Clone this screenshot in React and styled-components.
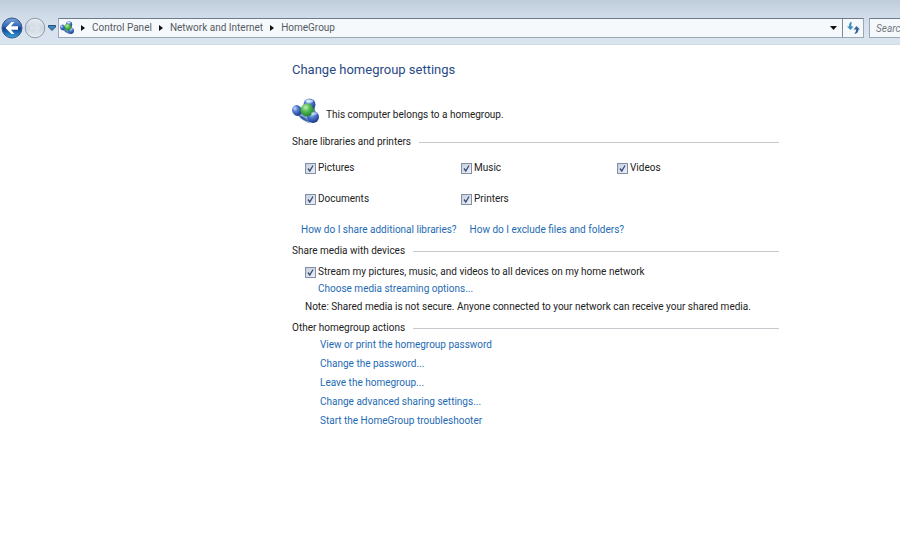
import React from "react";
import styled, { createGlobalStyle } from "styled-components";

const GlobalStyle = createGlobalStyle`
  * { box-sizing: border-box; }
  body {
    margin: 0;
    background: #fff;
    color: #222;
    font-family: Roboto, "Open Sans", sans-serif;
    font-size: 10px;
    line-height: 16px;
    overflow-x: hidden;
  }
`;

const Toolbar = styled.header`
  display: flex;
  align-items: flex-end;
  height: 45px;
  padding-bottom: 6px;
  background: linear-gradient(#bfccdb 0, #ccd8e5 12px, #d7e2ee 26px, #dae4ef 100%);
  border-bottom: 1px solid #d3dce7;
`;

const NavButtons = styled.div`
  display: flex;
  align-items: center;
  flex: none;
  width: 58px;
  height: 20px;
`;

const NavButton = styled.button`
  display: flex;
  align-items: center;
  justify-content: center;
  flex: none;
  width: ${(p) => p.$width}px;
  height: 22px;
  padding: 0;
  border: 0;
  background: none;
`;

const AddressBar = styled.nav`
  display: flex;
  align-items: center;
  flex: 1;
  min-width: 0;
  height: 20px;
  padding-left: 1px;
  background: #f6f9fc;
  border: 1px solid #9aa7b7;
  border-top-color: #6f7b8b;
`;

const Crumbs = styled.ol`
  display: flex;
  align-items: center;
  flex: 1;
  margin: 0;
  padding: 0;
  list-style: none;
  white-space: nowrap;
`;

const Crumb = styled.li`
  display: flex;
  align-items: center;
`;

const CrumbArrow = styled.svg`
  flex: none;
  width: 18px;
  height: 8px;
  fill: #111;
`;

const CrumbLink = styled.a`
  color: #555b63;
  text-decoration: none;
`;

const BarButton = styled.button`
  display: flex;
  align-items: center;
  justify-content: center;
  flex: none;
  width: ${(p) => p.$width}px;
  height: 18px;
  padding: 0;
  border: 0;
  border-left: ${(p) => (p.$divided ? "1px solid #7b8796" : "0")};
  background: none;
`;

const SearchBox = styled.input`
  flex: none;
  width: 31px;
  height: 20px;
  margin-left: 5px;
  padding: 0 0 0 6px;
  border: 1px solid #9aa7b7;
  border-top-color: #6f7b8b;
  border-right: 0;
  border-radius: 0;
  background: #f6f9fc;
  font: italic 10px Roboto, "Open Sans", sans-serif;
  outline: 0;
  &::placeholder { color: #73787f; opacity: 1; }
`;

const Content = styled.main`
  max-width: 779px;
  padding: 15px 0 24px 292px;
`;

const Title = styled.h1`
  margin: 0;
  color: #2a4a86;
  font-size: 13px;
  font-weight: 400;
  line-height: 20px;
`;

const Intro = styled.div`
  display: flex;
  align-items: flex-end;
  gap: 7px;
  height: 26px;
  margin-top: 19px;
  line-height: 20px;
`;

const SectionHeading = styled.h2`
  display: flex;
  align-items: center;
  gap: 8px;
  margin: ${(p) => p.$top}px 0 0;
  font-size: 10px;
  font-weight: 400;
  white-space: nowrap;
  &::after {
    content: "";
    flex: 1;
    height: 1px;
    background: #c6c9cd;
  }
`;

const CheckGrid = styled.div`
  display: grid;
  grid-template-columns: repeat(3, 156px);
  row-gap: 15px;
  margin: 10px 0 0 13px;
`;

const CheckLabel = styled.label`
  display: flex;
  align-items: center;
  gap: 2px;
`;

const TickCell = styled.span`
  display: grid;
  flex: none;
  > * { grid-area: 1 / 1; }
`;

const TickInput = styled.input`
  appearance: none;
  width: 11px;
  height: 11px;
  margin: 0;
  border: 1px solid #8290a6;
  background: linear-gradient(135deg, #c6cfde, #edf1f7);
  &:not(:checked) + svg { visibility: hidden; }
`;

const TickMark = styled.svg`
  width: 11px;
  height: 11px;
  pointer-events: none;
`;

const HelpLinks = styled.div`
  display: flex;
  gap: 13px;
  margin: 15px 0 0 9px;
`;

const TextLink = styled.a`
  color: #1e6bb3;
  text-decoration: none;
`;

const Media = styled.div`
  display: grid;
  gap: 1px;
  margin: 5px 0 0 13px;
`;

const Indented = styled.div`
  padding-left: 13px;
`;

const Note = styled.p`
  margin: 1px 0 0;
`;

const Actions = styled.ul`
  display: grid;
  gap: 3px;
  margin: 1px 0 0;
  padding: 0 0 0 28px;
  list-style: none;
`;

function HomeGroupIcon({ size, id }) {
  return (
    <svg width={size} height={size} viewBox="0 0 27 26" aria-hidden="true">
      <defs>
        <radialGradient id={`${id}b`} cx=".4" cy=".25" r=".75">
          <stop offset="0" stopColor="#c4dafa" />
          <stop offset=".4" stopColor="#547fd0" />
          <stop offset="1" stopColor="#1b3788" />
        </radialGradient>
        <radialGradient id={`${id}g`} cx=".4" cy=".3" r=".75">
          <stop offset="0" stopColor="#c5f0b5" />
          <stop offset=".45" stopColor="#51b94c" />
          <stop offset="1" stopColor="#187b35" />
        </radialGradient>
      </defs>
      <path d="M1 9Q5 5 9 10L14 17Q16 20 18 25Q10 22 7 18Q2 15 1 9z" fill="#7fa0d0" />
      <path d="M18 6L22 6L24 16L19 16z" fill="#5c8f9c" />
      <circle cx="17.500" cy="6" r="6" fill={`url(#${id}b)`} />
      <ellipse cx="5" cy="12" rx="4.800" ry="5.500" fill={`url(#${id}b)`} transform="rotate(-25 5 12)" />
      <circle cx="21" cy="18.500" r="6" fill={`url(#${id}b)`} />
      <circle cx="15" cy="11.500" r="6.500" fill={`url(#${id}g)`} />
      <path d="M7 17Q12 18 17 23Q10 22 7 17" fill="#365cac" />
      <ellipse cx="17.500" cy="2.500" rx="3.500" ry="1.500" fill="#fff" opacity=".6" />
      <ellipse cx="22" cy="15" rx="3" ry="1.500" fill="#fff" opacity=".45" />
    </svg>
  );
}

function BackIcon() {
  return (
    <svg width="22" height="22" viewBox="0 0 22 22" aria-hidden="true">
      <defs>
        <linearGradient id="back" x2="0" y2="1">
          <stop offset="0" stopColor="#7ba6dc" />
          <stop offset=".45" stopColor="#2863b2" />
          <stop offset=".5" stopColor="#0c3b8e" />
          <stop offset="1" stopColor="#35a8e2" />
        </linearGradient>
      </defs>
      <circle cx="11" cy="11" r="10" fill="url(#back)" stroke="#385584" />
      <path d="M4.500 11L10.500 5H13.500L10 9.300H17V12.700H10L13.500 17H10.500z" fill="#fff" />
    </svg>
  );
}

function ForwardIcon() {
  return (
    <svg width="22" height="22" viewBox="0 0 22 22" aria-hidden="true">
      <defs>
        <linearGradient id="forward" x2="0" y2="1">
          <stop offset="0" stopColor="#e9eff6" />
          <stop offset=".5" stopColor="#ccd5df" />
          <stop offset="1" stopColor="#e8eef5" />
        </linearGradient>
      </defs>
      <circle cx="11" cy="11" r="9.8" fill="url(#forward)" stroke="#8f9bab" />
      <path d="M17 11L11.500 6V9.500H6V12.500H11.500V16z" fill="#e2e8ef" opacity=".6" />
    </svg>
  );
}

function Check({ label }) {
  return (
    <CheckLabel>
      <TickCell>
        <TickInput type="checkbox" defaultChecked />
        <TickMark viewBox="0 0 11 11" aria-hidden="true">
          <path d="M3 5.500L4.800 8L8 2.500" fill="none" stroke="#3b4b78" strokeWidth="1.300" />
        </TickMark>
      </TickCell>
      {label}
    </CheckLabel>
  );
}

const crumbs = ["Control Panel", "Network and Internet", "HomeGroup"];
const libraries = ["Pictures", "Music", "Videos", "Documents", "Printers"];
const actions = [
  "View or print the homegroup password",
  "Change the password...",
  "Leave the homegroup...",
  "Change advanced sharing settings...",
  "Start the HomeGroup troubleshooter",
];

export default function App() {
  return (
    <>
      <GlobalStyle />
      <Toolbar>
        <NavButtons>
          <NavButton $width={23} aria-label="Back"><BackIcon /></NavButton>
          <NavButton $width={23} aria-label="Forward"><ForwardIcon /></NavButton>
          <NavButton $width={12} aria-label="Recent pages">
            <svg width="8" height="6" viewBox="0 0 8 6" aria-hidden="true">
              <path d="M.5.500h7v1.500L4 5.500L.5 2z" fill="#3f84b8" stroke="#24517d" />
            </svg>
          </NavButton>
        </NavButtons>
        <AddressBar aria-label="Address">
          <HomeGroupIcon size={14} id="small" />
          <Crumbs>
            {crumbs.map((name) => (
              <Crumb key={name}>
                <CrumbArrow viewBox="0 0 18 8" aria-hidden="true"><path d="M7 1v6l4-3z" /></CrumbArrow>
                <CrumbLink href="#">{name}</CrumbLink>
              </Crumb>
            ))}
          </Crumbs>
          <BarButton $width={18} aria-label="Previous locations">
            <svg width="7" height="4" viewBox="0 0 7 4" aria-hidden="true"><path d="M0 0h7L3.500 4z" fill="#111" /></svg>
          </BarButton>
          <BarButton $width={21} $divided aria-label="Refresh">
            <svg width="13" height="12" viewBox="0 0 13 12" aria-hidden="true">
              <path d="M3.500 0Q1.500 2 2 4.500H0L3.500 8L6.500 4.500H4.500Q3.800 2 5 .5z" fill="#3c8fba" />
              <path d="M8 12Q11.500 11 11.500 7.500H13L9.500 4L6.500 7.500H9Q9.300 10 7.500 11z" fill="#3b6798" />
            </svg>
          </BarButton>
        </AddressBar>
        <SearchBox type="text" placeholder="Search Control Panel" aria-label="Search Control Panel" />
      </Toolbar>
      <Content>
        <Title>Change homegroup settings</Title>
        <Intro>
          <HomeGroupIcon size={27} id="large" />
          <span>This computer belongs to a homegroup.</span>
        </Intro>
        <SectionHeading $top={9}>Share libraries and printers</SectionHeading>
        <CheckGrid>
          {libraries.map((name) => <Check key={name} label={name} />)}
        </CheckGrid>
        <HelpLinks>
          <TextLink href="#">How do I share additional libraries?</TextLink>
          <TextLink href="#">How do I exclude files and folders?</TextLink>
        </HelpLinks>
        <SectionHeading $top={5}>Share media with devices</SectionHeading>
        <Media>
          <Check label="Stream my pictures, music, and videos to all devices on my home network" />
          <Indented><TextLink href="#">Choose media streaming options...</TextLink></Indented>
          <Note>Note: Shared media is not secure. Anyone connected to your network can receive your shared media.</Note>
        </Media>
        <SectionHeading $top={5}>Other homegroup actions</SectionHeading>
        <Actions>
          {actions.map((name) => <li key={name}><TextLink href="#">{name}</TextLink></li>)}
        </Actions>
      </Content>
    </>
  );
}
